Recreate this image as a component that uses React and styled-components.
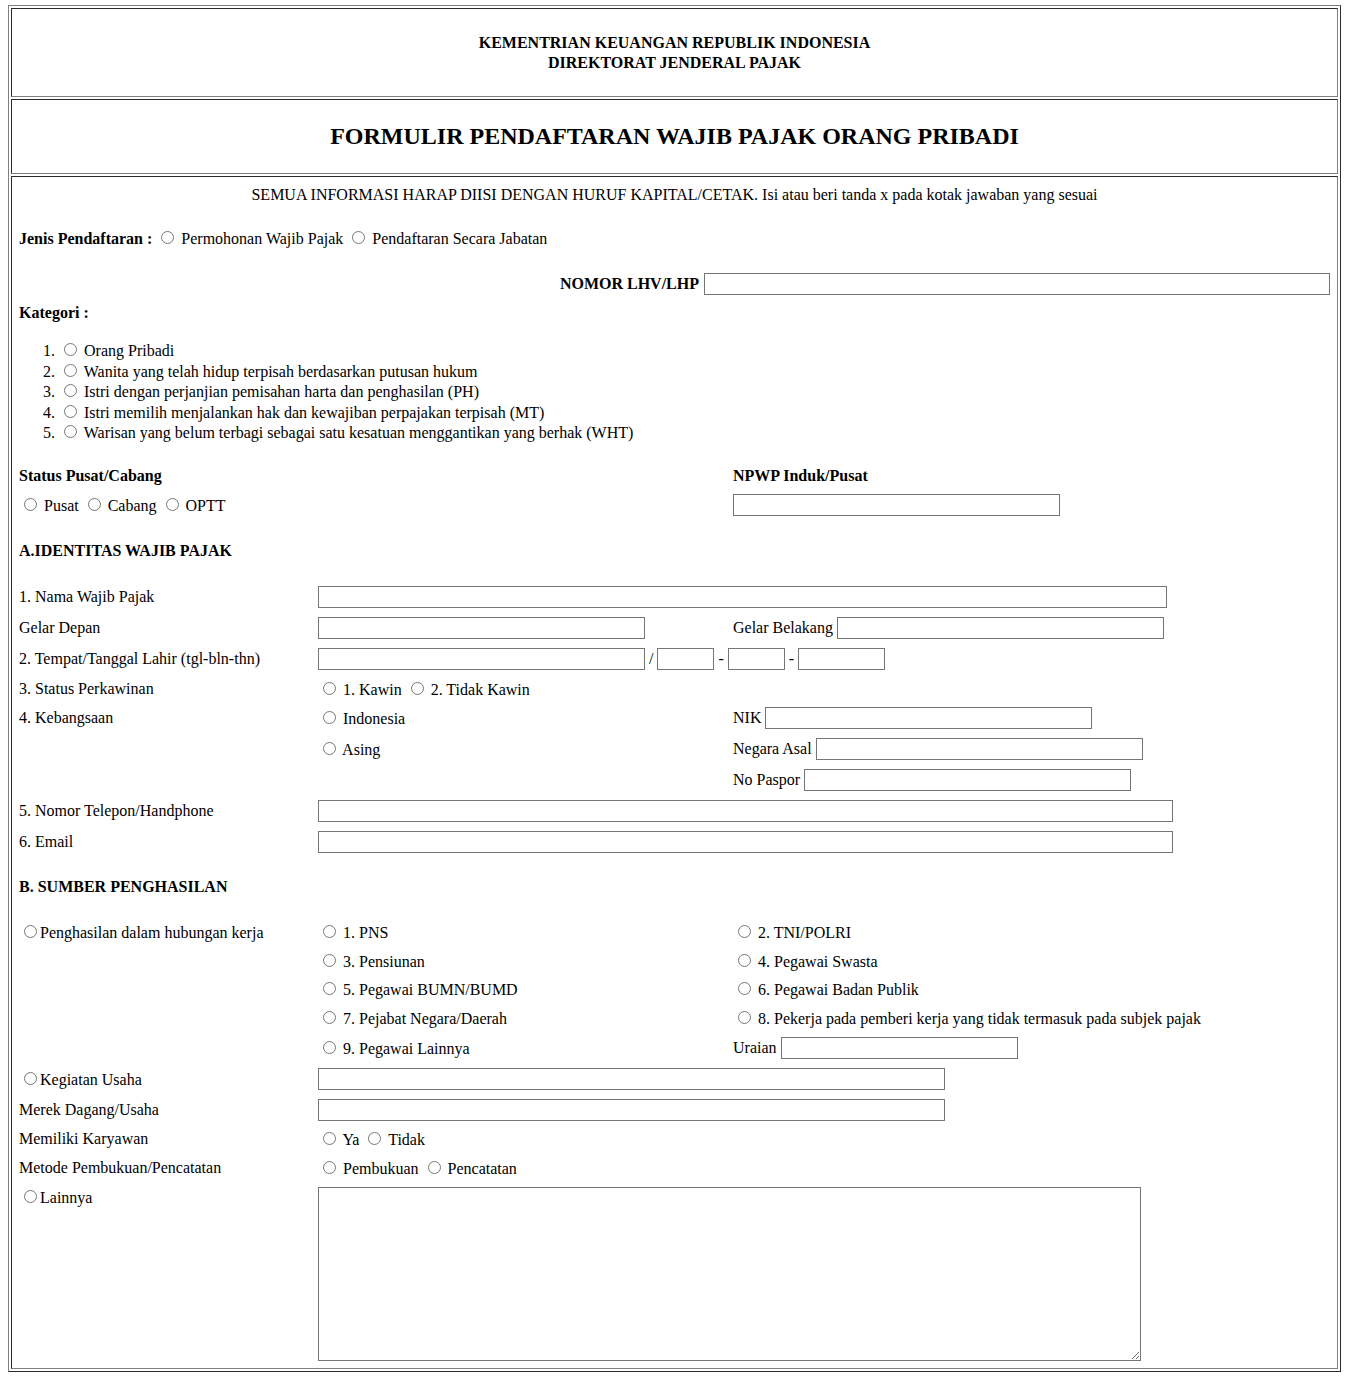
import React from "react";
import styled, { createGlobalStyle } from "styled-components";

const GlobalStyle = createGlobalStyle`
  body {
    margin: 5px 8px 8px;
    font-family: "Liberation Serif", "Times New Roman", Times, serif;
    font-size: 16px;
    color: #000;
    background: #fff;
  }
`;

const Frame = styled.div`
  border: 1px outset gray;
  padding: 2px;
  display: flex;
  flex-direction: column;
  gap: 2px;
`;

const Panel = styled.div`
  border: 1px inset gray;
  padding: ${({ $pad }) => $pad || "1px"};
  text-align: ${({ $center }) => ($center ? "center" : "left")};
`;

const Agency = styled.div`
  font-weight: bold;
  line-height: 20px;
`;

const FormTitle = styled.h2`
  margin: 0;
  font-size: 24px;
  line-height: 28px;
`;

/* one line of the form, content centred vertically */
const Line = styled.div`
  display: flex;
  align-items: center;
  justify-content: ${({ $justify }) => $justify || "flex-start"};
  gap: ${({ $gap }) => $gap || 0}px;
  height: ${({ $h }) => $h}px;
  margin-top: ${({ $mt }) => $mt || 0}px;
  font-weight: ${({ $bold }) => ($bold ? "bold" : "normal")};
`;

const Split = styled.div`
  display: grid;
  grid-template-columns: 714px 1fr;
  align-items: center;
  height: ${({ $h }) => $h}px;
  margin-top: ${({ $mt }) => $mt || 0}px;
  font-weight: ${({ $bold }) => ($bold ? "bold" : "normal")};
`;

const FieldRow = styled.div`
  display: grid;
  grid-template-columns: 299px 415px 1fr;
  align-items: ${({ $top }) => ($top ? "start" : "center")};
  height: ${({ $h }) => ($h ? `${$h}px` : "auto")};
  margin-top: ${({ $mt }) => $mt || 0}px;
  padding-top: ${({ $top }) => ($top ? "5px" : "0")};
`;

const Cell = styled.div`
  grid-column: ${({ $span }) => ($span ? `span ${$span}` : "auto")};
  white-space: nowrap;
`;

const KategoriList = styled.ol`
  margin: 19px 0 0;
  padding-left: 40px;

  li {
    height: 20.5px;
    white-space: nowrap;
  }
`;

const Radio = styled.input.attrs({ type: "radio" })`
  margin: 3px 3px 0 5px;
`;

const TextBox = styled.input.attrs({ type: "text" })`
  box-sizing: border-box;
  width: ${({ $w }) => $w}px;
  height: 22px;
  margin: 0;
  padding: 1px 2px;
  border: 1px solid #767676;
  border-radius: 0;
  font: 13.333px Arial, "Liberation Sans", sans-serif;
`;

const AreaBox = styled.textarea`
  display: block;
  box-sizing: border-box;
  width: 823px;
  height: 174px;
  margin: 0;
  padding: 2px;
  border: 1px solid #767676;
  border-radius: 0;
  font: 13.333px "Liberation Mono", monospace;
`;

const kategori = [
  "Orang Pribadi",
  "Wanita yang telah hidup terpisah berdasarkan putusan hukum",
  "Istri dengan perjanjian pemisahan harta dan penghasilan (PH)",
  "Istri memilih menjalankan hak dan kewajiban perpajakan terpisah (MT)",
  "Warisan yang belum terbagi sebagai satu kesatuan menggantikan yang berhak (WHT)",
];

const pekerjaan = [
  ["1. PNS", "2. TNI/POLRI"],
  ["3. Pensiunan", "4. Pegawai Swasta"],
  ["5. Pegawai BUMN/BUMD", "6. Pegawai Badan Publik"],
  [
    "7. Pejabat Negara/Daerah",
    "8. Pekerja pada pemberi kerja yang tidak termasuk pada subjek pajak",
  ],
];

const App = () => {
  return (
    <>
      <GlobalStyle />
      <Frame>
        <Panel $center $pad="24px 0 23px">
          <Agency>
            KEMENTRIAN KEUANGAN REPUBLIK INDONESIA
            <br />
            DIREKTORAT JENDERAL PAJAK
          </Agency>
        </Panel>

        <Panel $center $pad="22px 0 23px">
          <FormTitle>FORMULIR PENDAFTARAN WAJIB PAJAK ORANG PRIBADI</FormTitle>
        </Panel>

        <Panel $pad="0 7px 7px">
          <Line $h={36} $justify="center">
            <span>
              SEMUA INFORMASI HARAP DIISI DENGAN HURUF KAPITAL/CETAK. Isi atau
              beri tanda x pada kotak jawaban yang sesuai
            </span>
          </Line>

          <Line $h={50}>
            <span>
              <b>Jenis Pendaftaran :</b> <Radio name="jenis" /> Permohonan Wajib
              Pajak <Radio name="jenis" /> Pendaftaran Secara Jabatan
            </span>
          </Line>

          <Line $h={42} $justify="flex-end" $gap={5}>
            <b>NOMOR LHV/LHP</b>
            <TextBox $w={626} />
          </Line>

          <Line $h={16} $bold>
            <span>Kategori :</span>
          </Line>

          <KategoriList>
            {kategori.map((item) => (
              <li key={item}>
                <Radio name="kategori" /> {item}
              </li>
            ))}
          </KategoriList>

          <Split $h={20} $mt={23.5} $bold>
            <span>Status Pusat/Cabang</span>
            <span>NPWP Induk/Pusat</span>
          </Split>
          <Split $h={38}>
            <Cell>
              <Radio name="status" /> Pusat <Radio name="status" /> Cabang{" "}
              <Radio name="status" /> OPTT
            </Cell>
            <Cell>
              <TextBox $w={327} />
            </Cell>
          </Split>

          <Line $h={20} $mt={17} $bold>
            <span>A.IDENTITAS WAJIB PAJAK</span>
          </Line>

          <FieldRow $h={31} $mt={20.5}>
            <Cell>1. Nama Wajib Pajak</Cell>
            <Cell $span={2}>
              <TextBox $w={849} />
            </Cell>
          </FieldRow>
          <FieldRow $h={31}>
            <Cell>Gelar Depan</Cell>
            <Cell>
              <TextBox $w={327} />
            </Cell>
            <Cell>
              Gelar Belakang <TextBox $w={327} />
            </Cell>
          </FieldRow>
          <FieldRow $h={31}>
            <Cell>2. Tempat/Tanggal Lahir (tgl-bln-thn)</Cell>
            <Cell $span={2}>
              <TextBox $w={327} /> / <TextBox $w={57} /> -{" "}
              <TextBox $w={57} /> - <TextBox $w={87} />
            </Cell>
          </FieldRow>
          <FieldRow $h={28}>
            <Cell>3. Status Perkawinan</Cell>
            <Cell>
              <Radio name="kawin" /> 1. Kawin <Radio name="kawin" /> 2. Tidak
              Kawin
            </Cell>
          </FieldRow>
          <FieldRow $h={31}>
            <Cell>4. Kebangsaan</Cell>
            <Cell>
              <Radio name="bangsa" /> Indonesia
            </Cell>
            <Cell>
              NIK <TextBox $w={327} />
            </Cell>
          </FieldRow>
          <FieldRow $h={31}>
            <Cell />
            <Cell>
              <Radio name="bangsa" /> Asing
            </Cell>
            <Cell>
              Negara Asal <TextBox $w={327} />
            </Cell>
          </FieldRow>
          <FieldRow $h={31}>
            <Cell />
            <Cell />
            <Cell>
              No Paspor <TextBox $w={327} />
            </Cell>
          </FieldRow>
          <FieldRow $h={31}>
            <Cell>5. Nomor Telepon/Handphone</Cell>
            <Cell $span={2}>
              <TextBox $w={855} />
            </Cell>
          </FieldRow>
          <FieldRow $h={31}>
            <Cell>6. Email</Cell>
            <Cell $span={2}>
              <TextBox $w={855} />
            </Cell>
          </FieldRow>

          <Line $h={20} $mt={19.5} $bold>
            <span>B. SUMBER PENGHASILAN</span>
          </Line>

          {pekerjaan.map(([left, right], i) => (
            <FieldRow key={left} $h={28.5} $mt={i === 0 ? 21 : 0}>
              <Cell>
                {i === 0 && (
                  <>
                    <Radio name="sumber" />
                    Penghasilan dalam hubungan kerja
                  </>
                )}
              </Cell>
              <Cell>
                <Radio name="pekerjaan" /> {left}
              </Cell>
              <Cell>
                <Radio name="pekerjaan" /> {right}
              </Cell>
            </FieldRow>
          ))}
          <FieldRow $h={31}>
            <Cell />
            <Cell>
              <Radio name="pekerjaan" /> 9. Pegawai Lainnya
            </Cell>
            <Cell>
              Uraian <TextBox $w={237} />
            </Cell>
          </FieldRow>
          <FieldRow $h={31}>
            <Cell>
              <Radio name="sumber" />
              Kegiatan Usaha
            </Cell>
            <Cell $span={2}>
              <TextBox $w={627} />
            </Cell>
          </FieldRow>
          <FieldRow $h={31}>
            <Cell>Merek Dagang/Usaha</Cell>
            <Cell $span={2}>
              <TextBox $w={627} />
            </Cell>
          </FieldRow>
          <FieldRow $h={28.5}>
            <Cell>Memiliki Karyawan</Cell>
            <Cell>
              <Radio name="karyawan" /> Ya <Radio name="karyawan" /> Tidak
            </Cell>
          </FieldRow>
          <FieldRow $h={28.5}>
            <Cell>Metode Pembukuan/Pencatatan</Cell>
            <Cell>
              <Radio name="metode" /> Pembukuan <Radio name="metode" />{" "}
              Pencatatan
            </Cell>
          </FieldRow>
          <FieldRow $top>
            <Cell>
              <Radio name="sumber" />
              Lainnya
            </Cell>
            <Cell $span={2}>
              <AreaBox />
            </Cell>
          </FieldRow>
        </Panel>
      </Frame>
    </>
  );
};

export default App;
